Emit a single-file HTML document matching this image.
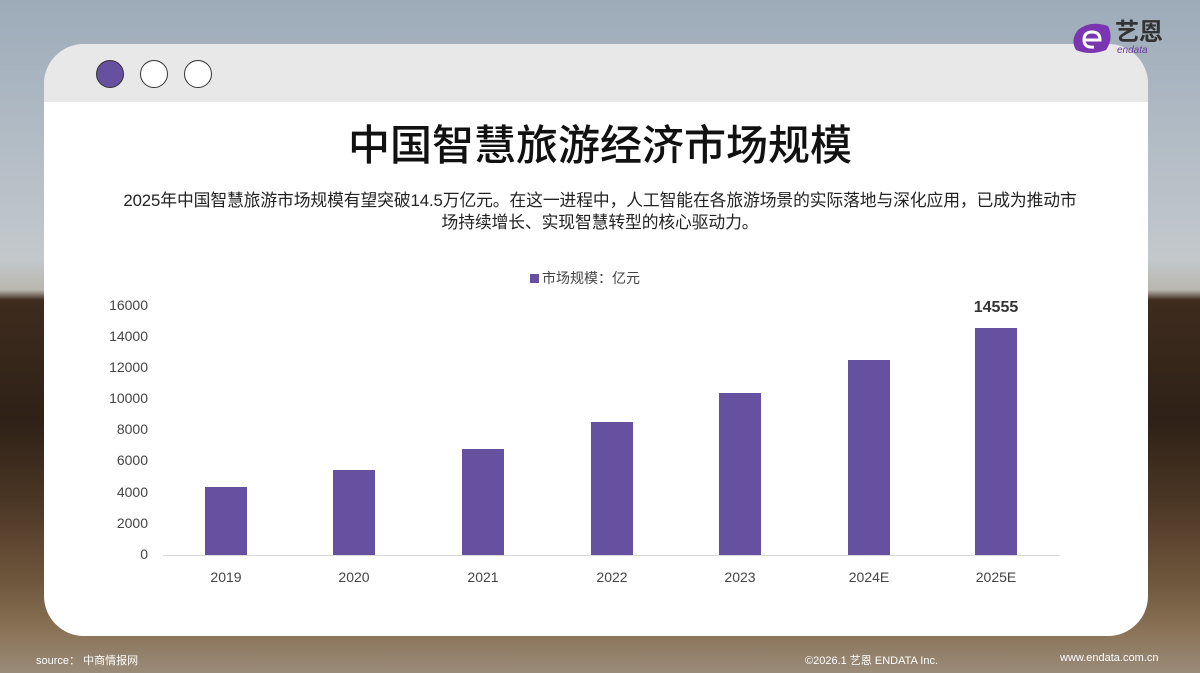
<!DOCTYPE html>
<html><head><meta charset="utf-8"><style>
*{margin:0;padding:0;box-sizing:border-box}
body{width:1200px;height:673px;overflow:hidden;position:relative;font-family:"Liberation Sans","Noto Sans CJK SC",sans-serif;
background:linear-gradient(180deg,#9dabb9 0px,#b3bdc6 150px,#c3c8cb 260px,#b9b6ae 290px,#3e2c1e 300px,#2f2117 420px,#4a3624 500px,#6e563c 580px,#8a7256 630px,#9a8c7a 673px);}
.card{position:absolute;left:44px;top:44px;width:1104px;height:592px;background:#fff;border-radius:40px;overflow:hidden}
.hdr{position:absolute;left:0;top:0;width:100%;height:58px;background:#e8e8e9}
.dot{position:absolute;top:16px;width:28px;height:28px;border-radius:50%;border:1.5px solid #333;background:#fff}
.t{position:absolute;left:0;width:1200px;text-align:center;color:#222}
.yl{position:absolute;width:60px;left:88px;text-align:right;font-size:14px;color:#444}
.bar{position:absolute;width:42px;background:#6651a0}
.xl{position:absolute;width:80px;text-align:center;font-size:14px;color:#444;top:569px}
.f{position:absolute;top:652px;font-size:11px;color:#fff}
</style></head><body>
<div class="card"><div class="hdr"></div>
<div class="dot" style="left:52px;background:#6651a0"></div>
<div class="dot" style="left:96px"></div>
<div class="dot" style="left:140px"></div>
</div>
<div class="t" style="top:118px;font-size:42px;line-height:56px;color:#111;font-weight:500">中国智慧旅游经济市场规模</div>
<div class="t" style="top:190px;font-size:16.8px;line-height:22px;letter-spacing:-0.1px">2025年中国智慧旅游市场规模有望突破14.5万亿元。在这一进程中，人工智能在各旅游场景的实际落地与深化应用，已成为推动市<br>场持续增长、实现智慧转型的核心驱动力。</div>
<div style="position:absolute;left:530px;top:268px;font-size:14px;color:#444"><span style="display:inline-block;width:9px;height:9px;background:#6651a0;margin-right:3px"></span>市场规模：亿元</div>
<div class="yl" style="top:297px">16000</div>
<div class="yl" style="top:328px">14000</div>
<div class="yl" style="top:359px">12000</div>
<div class="yl" style="top:390px">10000</div>
<div class="yl" style="top:421px">8000</div>
<div class="yl" style="top:452px">6000</div>
<div class="yl" style="top:484px">4000</div>
<div class="yl" style="top:515px">2000</div>
<div class="yl" style="top:546px">0</div>
<div style="position:absolute;left:163px;top:555px;width:897px;height:1px;background:#d8d8d8"></div>
<div class="bar" style="left:205px;top:487px;height:68px"></div>
<div class="bar" style="left:333px;top:470px;height:85px"></div>
<div class="bar" style="left:462px;top:449px;height:106px"></div>
<div class="bar" style="left:591px;top:422px;height:133px"></div>
<div class="bar" style="left:719px;top:393px;height:162px"></div>
<div class="bar" style="left:848px;top:360px;height:195px"></div>
<div class="bar" style="left:975px;top:328px;height:227px"></div>
<div style="position:absolute;left:956px;top:299px;width:80px;text-align:center;font-size:16px;font-weight:bold;color:#333">14555</div>
<div class="xl" style="left:186px">2019</div>
<div class="xl" style="left:314px">2020</div>
<div class="xl" style="left:443px">2021</div>
<div class="xl" style="left:572px">2022</div>
<div class="xl" style="left:700px">2023</div>
<div class="xl" style="left:829px">2024E</div>
<div class="xl" style="left:956px">2025E</div>
<div class="f" style="left:36px">source： 中商情报网</div>
<div class="f" style="left:805px">©2026.1 艺恩 ENDATA Inc.</div>
<div class="f" style="left:1060px">www.endata.com.cn</div>
<svg style="position:absolute;left:1070px;top:20px" width="44" height="36" viewBox="0 0 44 36"><path d="M6 30 Q0 20 8 10 Q20 0 38 6 Q44 18 36 30 Q20 36 6 30Z" fill="#7a35b0"/><path d="M14 20 H30 Q30 12 22 12 Q14 12 14 20 Q14 28 24 27" stroke="#fff" stroke-width="3" fill="none"/></svg>
<div style="position:absolute;left:1115px;top:20px;font-size:24px;font-weight:bold;color:#333;line-height:26px">艺恩</div>
<div style="position:absolute;left:1117px;top:45px;font-size:10px;color:#6a3a9a;font-style:italic">endata</div>
</body></html>
